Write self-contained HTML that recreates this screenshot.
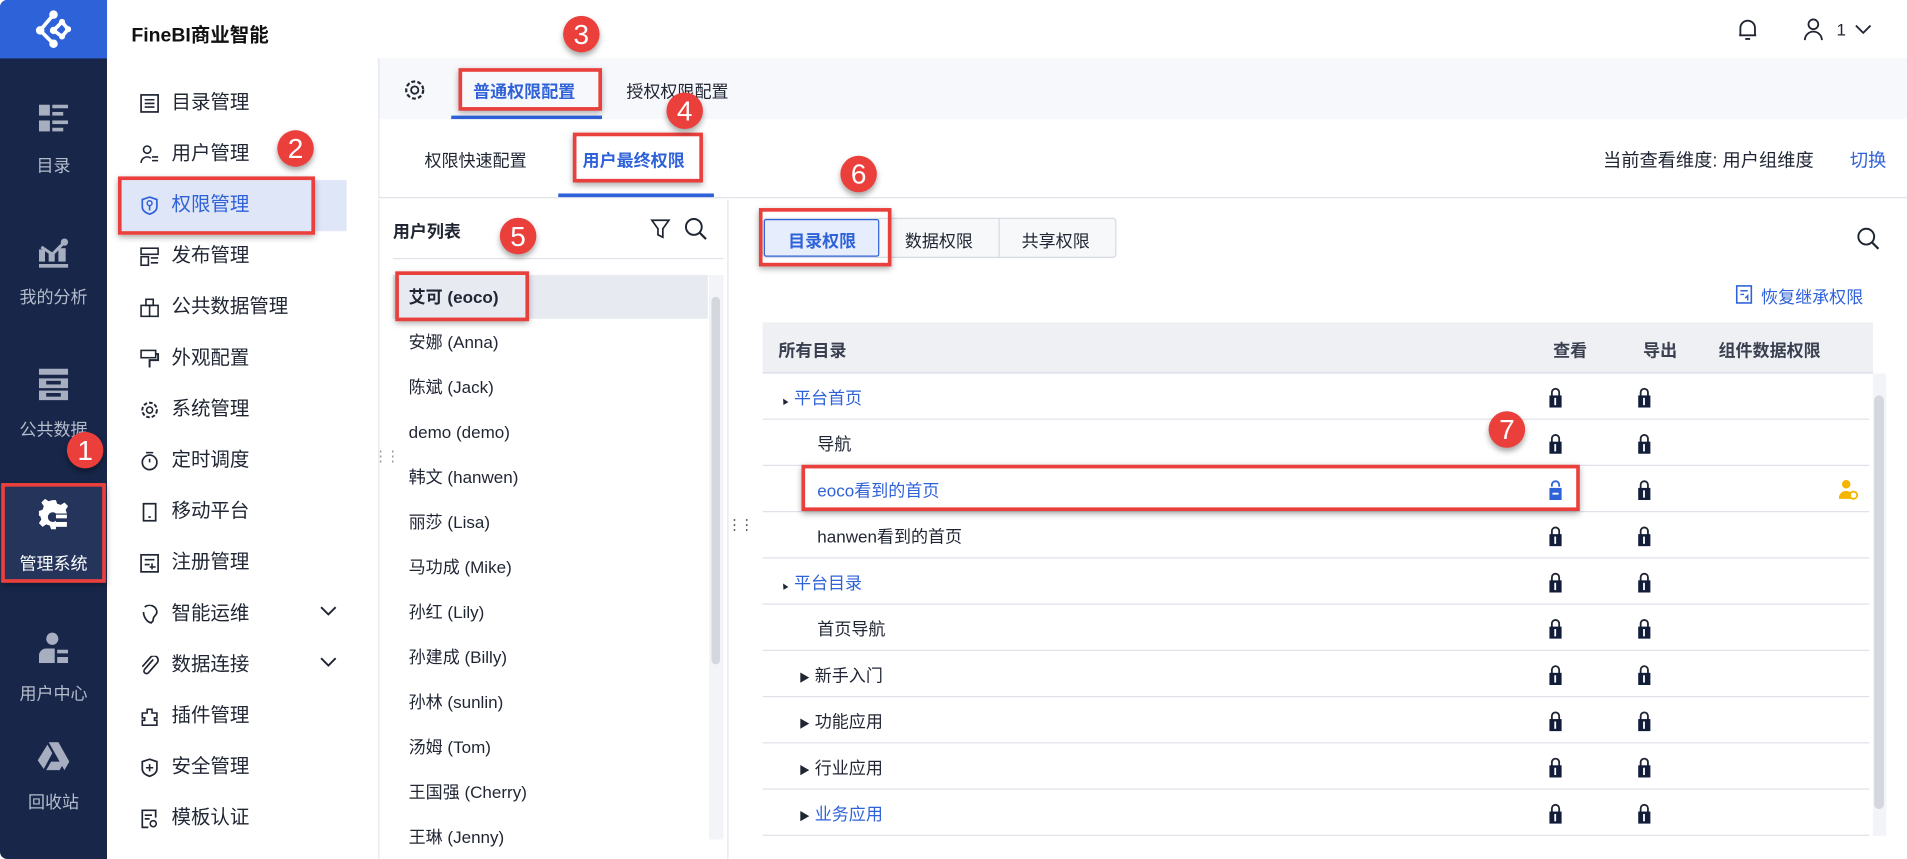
<!DOCTYPE html>
<html><head><meta charset="utf-8"><style>
*{margin:0;padding:0;box-sizing:border-box}
html,body{width:1907px;height:859px;overflow:hidden;background:#fff}
#s{position:absolute;left:0;top:0;width:1568px;height:706px;transform:scale(1.2162,1.2167);transform-origin:0 0;font-family:"Liberation Sans","Noto Sans CJK SC",sans-serif;color:#1f2532;font-size:14px}
.a{position:absolute}
.side{left:0;top:0;width:88px;height:706px;background:#172649;border-radius:6px 0 0 6px;overflow:hidden}
.logo{left:0;top:0;width:88px;height:48px;background:#2e62d9}
.si{position:absolute;left:0;width:88px;text-align:center;color:#b4bccb;font-size:14px}
.menu{left:88px;top:48px;width:222px;height:658px;background:#fff}
.mi{position:absolute;left:116px;font-size:16px;color:#1f2532;line-height:20px}
.mi svg{position:absolute;left:-1px;top:2px}
.mi span{margin-left:25px}
.red{position:absolute;border:3px solid #e9403d;box-shadow:0 2px 5px rgba(0,0,0,.35)}
.num{position:absolute;width:30px;height:30px;border-radius:50%;background:#ea3f3b;color:#fff;font-size:23px;text-align:center;line-height:30px;box-shadow:0 3px 5px rgba(0,0,0,.35);font-family:"Liberation Sans",sans-serif}
.ul{position:absolute;left:336px;font-size:14px;line-height:18px}
.row{position:absolute;left:627px;width:910px;height:38px;border-bottom:1px solid #dfe2e8}
.row .t{position:absolute;top:10px;font-size:14px}
.lk{position:absolute;top:11px}
.blue{color:#2f62d9}
</style></head><body><div id="s">
<div class="a" style="left:88px;top:0;width:1480px;height:48px;background:#fff;box-shadow:0 2px 4px rgba(0,0,0,.05)"></div>
<div class="a" style="left:108px;top:15px;font-size:16px;font-weight:bold;color:#111">FineBI商业智能</div>
<svg class="a" style="left:1428px;top:14px" width="18" height="20" viewBox="0 0 18 20"><path d="M3 15V9a6 6 0 0 1 12 0v6M2 15h14M7 18h4" fill="none" stroke="#1f2532" stroke-width="1.5"/></svg>
<svg class="a" style="left:1482px;top:14px" width="18" height="20" viewBox="0 0 18 20"><circle cx="9" cy="6" r="4" fill="none" stroke="#1f2532" stroke-width="1.5"/><path d="M2 19a7 7 0 0 1 14 0" fill="none" stroke="#1f2532" stroke-width="1.5"/></svg>
<div class="a" style="left:1510px;top:16px;font-size:14px">1</div>
<svg class="a" style="left:1524px;top:19px" width="16" height="10"><path d="M2 2l6 6 6-6" fill="none" stroke="#1f2532" stroke-width="1.5"/></svg>
<div class="a side">
<div class="a logo"><svg class="a" style="left:26px;top:8px" width="36" height="34" viewBox="0 0 36 34"><g stroke="#fff" stroke-width="3" fill="none"><path d="M18 4L7 17l11 11M18 17l7-7 5 6-5 6-7-5"/></g><g fill="#fff"><circle cx="18" cy="4" r="3.5"/><circle cx="7" cy="17" r="3.5"/><circle cx="18" cy="28" r="3.5"/><circle cx="18" cy="17" r="3"/><circle cx="25" cy="10" r="2.5"/><circle cx="30" cy="16" r="2.5"/><circle cx="25" cy="22" r="2.5"/></g></svg></div>
<svg class="a" style="left:32px;top:86px" width="24" height="24"><g fill="#a6aebf"><rect x="0" y="0" width="9" height="9"/><rect x="11" y="0" width="13" height="3"/><rect x="11" y="6" width="9" height="3"/><rect x="0" y="13" width="9" height="9"/><rect x="11" y="13" width="13" height="3"/><rect x="11" y="19" width="9" height="3"/></g></svg>
<div class="si" style="top:126px">目录</div>
<svg class="a" style="left:32px;top:195px" width="26" height="26"><g fill="#a6aebf"><rect x="0" y="10" width="5" height="10"/><rect x="8" y="13" width="5" height="7"/><rect x="16" y="9" width="6" height="11"/><rect x="0" y="22" width="24" height="3"/></g><path d="M2 8l9 6 10-10" fill="none" stroke="#a6aebf" stroke-width="2.5"/><circle cx="21" cy="4" r="3" fill="#a6aebf"/></svg>
<div class="si" style="top:234px">我的分析</div>
<svg class="a" style="left:32px;top:303px" width="24" height="26"><g fill="#a6aebf"><rect x="0" y="0" width="24" height="5"/><rect x="0" y="8" width="24" height="8"/><rect x="0" y="18" width="24" height="8"/></g><g fill="#172649"><rect x="6" y="10" width="12" height="3"/><rect x="6" y="20" width="12" height="3"/></g></svg>
<div class="si" style="top:343px">公共数据</div>
<div class="a" style="left:0;top:398px;width:88px;height:80px;background:#25345a"></div>
<svg class="a" style="left:31px;top:410px" width="26" height="26" viewBox="0 0 26 26"><path d="M11 1h4l1 3 3 1 3-2 3 3-2 3 1 3h-9a4 4 0 1 0 0 6v7h-4l-1-3-3-1-3 2-3-3 2-3-1-3H1v-4l3-1 1-3-2-3 3-3 3 2 3-1z" fill="#fff"/><rect x="15" y="13" width="9" height="3" fill="#fff"/><rect x="15" y="19" width="9" height="4" fill="#fff"/></svg>
<div class="si" style="top:453px;color:#fff">管理系统</div>
<svg class="a" style="left:32px;top:519px" width="24" height="26"><circle cx="11" cy="6" r="5" fill="#a6aebf"/><path d="M0 26v-6a6 6 0 0 1 6-6h7v12z" fill="#a6aebf"/><rect x="15" y="15" width="9" height="3" fill="#a6aebf"/><rect x="15" y="21" width="9" height="5" fill="#a6aebf"/></svg>
<div class="si" style="top:560px">用户中心</div>
<svg class="a" style="left:31px;top:610px" width="26" height="24" viewBox="0 0 26 24"><path d="M9 0h8l9 16-4 7zM8 2l4 7-7 13-5-7zM7 23l4-7h11l-4 7z" fill="#a6aebf"/></svg>
<div class="si" style="top:649px">回收站</div>
</div>
<div class="a menu"></div>
<div class="a" style="left:98px;top:148px;width:187px;height:42px;background:#dfe6f8"></div>
<div class="mi" style="top:75px"><svg width="16" height="16"><rect x="1" y="1" width="14" height="14" fill="none" stroke="#1f2532" stroke-width="1.4"/><path d="M4 5h8M4 8h8M4 11h8" stroke="#1f2532" stroke-width="1.3"/></svg><span>目录管理</span></div>
<div class="mi" style="top:117px"><svg width="16" height="16"><circle cx="6" cy="4" r="3" fill="none" stroke="#1f2532" stroke-width="1.3"/><path d="M1 15a5 5 0 0 1 8-4M10 10h5M10 13h5" fill="none" stroke="#1f2532" stroke-width="1.3"/></svg><span>用户管理</span></div>
<div class="mi" style="top:159px;color:#2f62d9"><svg width="16" height="16"><path d="M8 1l6 2v6c0 3-3 5-6 6-3-1-6-3-6-6V3z" fill="none" stroke="#2f62d9" stroke-width="1.4"/><circle cx="8" cy="6" r="2" fill="none" stroke="#2f62d9" stroke-width="1.2"/><path d="M8 8v4" stroke="#2f62d9" stroke-width="1.3"/></svg><span>权限管理</span></div>
<div class="mi" style="top:201px"><svg width="16" height="16"><rect x="1" y="1" width="14" height="5" fill="none" stroke="#1f2532" stroke-width="1.3"/><rect x="1" y="8" width="6" height="7" fill="none" stroke="#1f2532" stroke-width="1.3"/><path d="M9 9h6M9 13h6" stroke="#1f2532" stroke-width="1.3"/></svg><span>发布管理</span></div>
<div class="mi" style="top:243px"><svg width="16" height="16"><rect x="1" y="6" width="14" height="9" fill="none" stroke="#1f2532" stroke-width="1.3"/><rect x="5" y="1" width="6" height="5" fill="none" stroke="#1f2532" stroke-width="1.3"/><path d="M8 6v9" stroke="#1f2532" stroke-width="1.3"/></svg><span>公共数据管理</span></div>
<div class="mi" style="top:285px"><svg width="16" height="16"><rect x="1" y="1" width="12" height="6" fill="none" stroke="#1f2532" stroke-width="1.3"/><path d="M13 4h2v5H8v6" fill="none" stroke="#1f2532" stroke-width="1.6"/></svg><span>外观配置</span></div>
<div class="mi" style="top:327px"><svg width="16" height="16"><circle cx="8" cy="8" r="6" fill="none" stroke="#1f2532" stroke-width="1.6" stroke-dasharray="3 1.6"/><circle cx="8" cy="8" r="2.5" fill="none" stroke="#1f2532" stroke-width="1.3"/></svg><span>系统管理</span></div>
<div class="mi" style="top:369px"><svg width="16" height="16"><circle cx="8" cy="9" r="6" fill="none" stroke="#1f2532" stroke-width="1.4"/><path d="M5 1h6M8 6v3" stroke="#1f2532" stroke-width="1.3"/></svg><span>定时调度</span></div>
<div class="mi" style="top:411px"><svg width="16" height="16"><rect x="3" y="1" width="10" height="14" fill="none" stroke="#1f2532" stroke-width="1.4"/><path d="M7 12h2" stroke="#1f2532" stroke-width="1.3"/></svg><span>移动平台</span></div>
<div class="mi" style="top:453px"><svg width="16" height="16"><rect x="1" y="1" width="14" height="14" fill="none" stroke="#1f2532" stroke-width="1.4"/><path d="M4 5h8M4 9h4M10 8v5M8 11h5" stroke="#1f2532" stroke-width="1.3"/></svg><span>注册管理</span></div>
<div class="mi" style="top:495px"><svg width="16" height="16"><path d="M4 2a6 6 0 0 1 10 4c0 3-3 3-3 6s-3 3-4 2M3 6c0 4 3 9 7 9" fill="none" stroke="#1f2532" stroke-width="1.4"/></svg><span>智能运维</span></div>
<div class="mi" style="top:537px"><svg width="16" height="16"><path d="M11 3L4 11a2 2 0 0 0 3 3l7-8a3.5 3.5 0 0 0-5-5L2 9" fill="none" stroke="#1f2532" stroke-width="1.4"/></svg><span>数据连接</span></div>
<svg class="a" style="left:262px;top:497px" width="16" height="10"><path d="M2 2l6 6 6-6" fill="none" stroke="#1f2532" stroke-width="1.6"/></svg>
<svg class="a" style="left:262px;top:539px" width="16" height="10"><path d="M2 2l6 6 6-6" fill="none" stroke="#1f2532" stroke-width="1.6"/></svg>
<div class="mi" style="top:579px"><svg width="16" height="16"><path d="M6 2h4v3h4v4h-2v2h2v4H2v-4h2V9H2V5h4z" fill="none" stroke="#1f2532" stroke-width="1.3"/></svg><span>插件管理</span></div>
<div class="mi" style="top:621px"><svg width="16" height="16"><path d="M8 1l6 2v6c0 3-3 5-6 6-3-1-6-3-6-6V3z" fill="none" stroke="#1f2532" stroke-width="1.4"/><path d="M8 5v6M5 8h6" stroke="#1f2532" stroke-width="1.3"/></svg><span>安全管理</span></div>
<div class="mi" style="top:663px"><svg width="16" height="16"><path d="M13 7V1H2v14h5M4 5h6M4 8h4" fill="none" stroke="#1f2532" stroke-width="1.4"/><circle cx="11" cy="12" r="2.5" fill="none" stroke="#1f2532" stroke-width="1.3"/></svg><span>模板认证</span></div>
<div class="a" style="left:311px;top:48px;width:1257px;height:50px;background:#f7f8fb;border-left:1px solid #e3e6ec"></div>
<svg class="a" style="left:332px;top:65px" width="18" height="18"><circle cx="9" cy="9" r="7" fill="none" stroke="#1f2532" stroke-width="1.8" stroke-dasharray="3.2 1.8"/><circle cx="9" cy="9" r="3" fill="none" stroke="#1f2532" stroke-width="1.5"/></svg>
<div class="a blue" style="left:389px;top:65px;font-size:14px;font-weight:bold">普通权限配置</div>
<div class="a" style="left:371px;top:95px;width:124px;height:3px;background:#2f62d9"></div>
<div class="a" style="left:515px;top:65px;font-size:14px">授权权限配置</div>
<div class="a" style="left:311px;top:98px;width:1257px;height:65px;background:#fff;border-bottom:1px solid #dfe2e8;border-left:1px solid #e3e6ec"></div>
<div class="a" style="left:349px;top:122px">权限快速配置</div>
<div class="a blue" style="left:479px;top:122px;font-weight:bold">用户最终权限</div>
<div class="a" style="left:459px;top:159px;width:128px;height:3px;background:#2f62d9"></div>
<div class="a" style="left:1318px;top:121px;font-size:15px">当前查看维度: 用户组维度</div>
<div class="a blue" style="left:1521px;top:121px;font-size:15px">切换</div>
<div class="a" style="left:311px;top:164px;width:1px;height:542px;background:#e3e6ec"></div>
<div class="a" style="left:323px;top:180px;font-weight:bold">用户列表</div>
<svg class="a" style="left:534px;top:179px" width="18" height="18"><path d="M2 2h14l-5 7v7l-4-2V9z" fill="none" stroke="#1f2532" stroke-width="1.4"/></svg>
<svg class="a" style="left:562px;top:178px" width="20" height="20"><circle cx="8.5" cy="8.5" r="6.5" fill="none" stroke="#1f2532" stroke-width="1.6"/><path d="M13.5 13.5l5 5" stroke="#1f2532" stroke-width="1.8"/></svg>
<div class="a" style="left:323px;top:212px;width:272px;height:1px;background:#dfe2e8"></div>
<div class="a" style="left:323px;top:226px;width:259px;height:36px;background:#e7eaf1"></div>
<div class="a" style="left:583px;top:226px;width:12px;height:464px;background:#f3f4f7"></div>
<div class="a" style="left:585px;top:244px;width:7px;height:302px;background:#d4d7de;border-radius:4px"></div>
<div class="ul" style="top:235px;font-weight:bold">艾可 (eoco)</div>
<div class="ul" style="top:272px">安娜 (Anna)</div>
<div class="ul" style="top:309px">陈斌 (Jack)</div>
<div class="ul" style="top:346px">demo (demo)</div>
<div class="ul" style="top:383px">韩文 (hanwen)</div>
<div class="ul" style="top:420px">丽莎 (Lisa)</div>
<div class="ul" style="top:457px">马功成 (Mike)</div>
<div class="ul" style="top:494px">孙红 (Lily)</div>
<div class="ul" style="top:531px">孙建成 (Billy)</div>
<div class="ul" style="top:568px">孙林 (sunlin)</div>
<div class="ul" style="top:605px">汤姆 (Tom)</div>
<div class="ul" style="top:642px">王国强 (Cherry)</div>
<div class="ul" style="top:679px">王琳 (Jenny)</div>
<div class="a" style="left:307px;top:368px;color:#999;font-size:12px;letter-spacing:-2px">⋮⋮</div>
<div class="a" style="left:598px;top:164px;width:1px;height:542px;background:#e3e6ec"></div>
<div class="a" style="left:598px;top:424px;color:#666;font-size:12px;letter-spacing:-2px">⋮⋮</div>
<div class="a" style="left:627px;top:179px;width:291px;height:33px;border:1px solid #d6dae2;border-radius:3px;background:#f7f8fa"></div>
<div class="a" style="left:628px;top:180px;width:95px;height:31px;border:1px solid #2f62d9;background:#e6eefd;border-radius:2px"></div>
<div class="a" style="left:821px;top:180px;width:1px;height:31px;background:#d6dae2"></div>
<div class="a blue" style="left:648px;top:188px;font-weight:bold">目录权限</div>
<div class="a" style="left:744px;top:188px">数据权限</div>
<div class="a" style="left:840px;top:188px">共享权限</div>
<svg class="a" style="left:1526px;top:186px" width="20" height="20"><circle cx="8.5" cy="8.5" r="6.5" fill="none" stroke="#1f2532" stroke-width="1.6"/><path d="M13.5 13.5l5 5" stroke="#1f2532" stroke-width="1.8"/></svg>
<svg class="a" style="left:1427px;top:234px" width="14" height="16"><rect x="1" y="1" width="12" height="14" fill="none" stroke="#2f62d9" stroke-width="1.3"/><path d="M4 5h6M4 8h3M8 11l2-2v4" fill="none" stroke="#2f62d9" stroke-width="1.2"/></svg>
<div class="a blue" style="left:1448px;top:234px">恢复继承权限</div>
<div class="a" style="left:627px;top:265px;width:913px;height:42px;background:#eef0f4;border-bottom:1px solid #d6dae2"></div>
<div class="a" style="left:640px;top:278px;font-weight:bold;color:#3a4050">所有目录</div>
<div class="a" style="left:1277px;top:278px;font-weight:bold;color:#3a4050">查看</div>
<div class="a" style="left:1351px;top:278px;font-weight:bold;color:#3a4050">导出</div>
<div class="a" style="left:1413px;top:278px;font-weight:bold;color:#3a4050">组件数据权限</div>
<div class="a" style="left:1540px;top:307px;width:11px;height:380px;background:#f3f4f7"></div>
<div class="a" style="left:1541px;top:325px;width:8px;height:340px;background:#d4d7de;border-radius:4px"></div>
<div id="rows"></div>
<div class="red" style="left:1px;top:397px;width:86px;height:82px"></div>
<div class="red" style="left:97px;top:145px;width:162px;height:48px"></div>
<div class="red" style="left:377px;top:56px;width:118px;height:35px"></div>
<div class="red" style="left:471px;top:109px;width:107px;height:41px"></div>
<div class="red" style="left:325px;top:223px;width:110px;height:41px"></div>
<div class="red" style="left:624px;top:171px;width:109px;height:48px"></div>
<div class="red" style="left:659px;top:382px;width:640px;height:38px"></div>
<div class="num" style="left:55px;top:355px">1</div>
<div class="num" style="left:228px;top:107px">2</div>
<div class="num" style="left:463px;top:13px">3</div>
<div class="num" style="left:548px;top:76px">4</div>
<div class="num" style="left:411px;top:179px">5</div>
<div class="num" style="left:691px;top:128px">6</div>
<div class="num" style="left:1224px;top:338px">7</div>
</div>
<script>
var L='<svg width="12" height="17" viewBox="0 0 12 17"><path d="M3 8V4.5a3 3 0 0 1 6 0V8" fill="none" stroke="#1f2532" stroke-width="1.5"/><rect x="1" y="7" width="10" height="10" fill="#121d3a"/><rect x="5" y="9" width="1.5" height="6" fill="#fff"/></svg>';
var U='<svg width="12" height="17" viewBox="0 0 12 17"><path d="M3 6V4.5a3 3 0 0 1 6 0V6" fill="none" stroke="#2f62d9" stroke-width="1.5"/><rect x="1" y="7" width="10" height="10" fill="#2f62d9"/><rect x="3.5" y="11" width="5" height="1.5" fill="#fff"/></svg>';
var rows=[["▲ 平台首页",1,0],["导航",0,0],["eoco看到的首页",1,0,1],["hanwen看到的首页",0,0],["▲ 平台目录",1,0],["首页导航",0,0],["▶ 新手入门",0,1],["▶ 功能应用",0,1],["▶ 行业应用",0,1],["▶ 业务应用",1,1]];
var h='';
rows.forEach(function(r,i){var top=307+i*38;var txt=r[0];var left=r[0].indexOf('▲')==0?14:(r[2]?30:45);
var col=r[1]?'#2f62d9':'#1f2532';
if(txt.indexOf('▲')==0)txt='<span style="font-size:8px;display:inline-block;transform:rotate(-30deg);color:#1f2532">▲</span> <span style="color:'+col+'">'+txt.slice(2)+'</span>';
else if(txt.indexOf('▶')==0)txt='<span style="font-size:9px;color:#1f2532">▶</span> <span style="color:'+col+'">'+txt.slice(2)+'</span>';
h+='<div class="row" style="top:'+top+'px"><div class="t" style="left:'+left+'px;color:'+col+'">'+txt+'</div><div class="lk" style="left:646px">'+(r[3]?U:L)+'</div><div class="lk" style="left:719px">'+L+'</div>'+(r[3]?'<svg class="lk" style="left:885px" width="16" height="17"><circle cx="6" cy="4" r="3.5" fill="#f5b400"/><path d="M0 16a6 6 0 0 1 10-5v5z" fill="#f5b400"/><circle cx="12" cy="13" r="3" fill="none" stroke="#f5b400" stroke-width="1.5"/></svg>':'')+'</div>';});
document.getElementById('rows').outerHTML=h;
</script>
</body></html>
